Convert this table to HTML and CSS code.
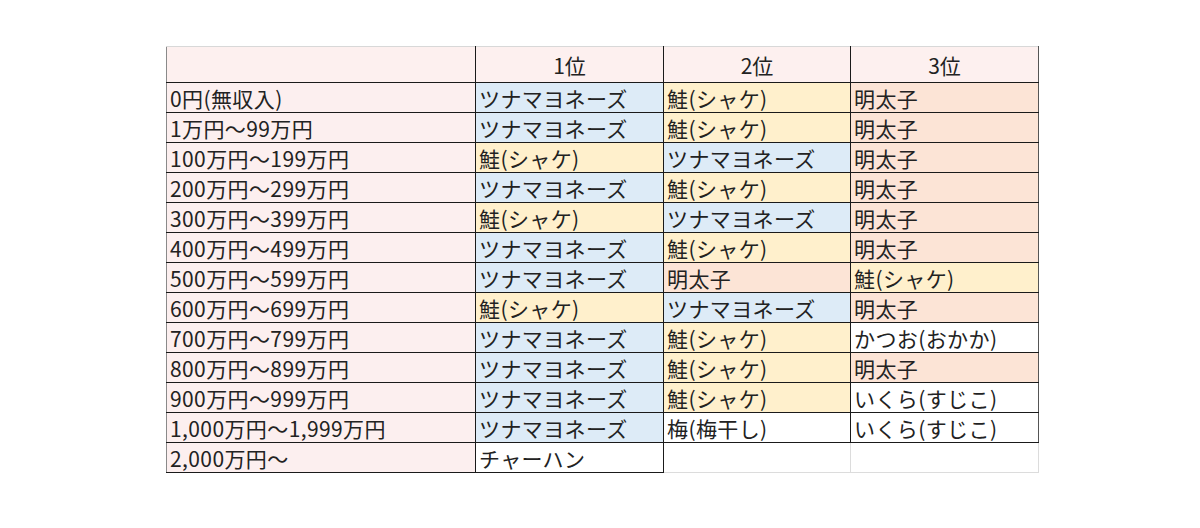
FILE: index.html
```html
<!DOCTYPE html>
<html lang="ja">
<head>
<meta charset="utf-8">
<title>年収別 好きなおにぎりの具</title>
<link rel="stylesheet" href="styles.css">
</head>
<body>
<div class="sheet">
<table class="rank">
<colgroup>
<col class="c-label"><col class="c-first"><col class="c-second"><col class="c-third">
</colgroup>
<thead>
<tr><th class="corner"></th><th>1位</th><th>2位</th><th class="last">3位</th></tr>
</thead>
<tbody>
<tr><td class="label">0円(無収入)</td><td class="tuna">ツナマヨネーズ</td><td class="sake">鮭(シャケ)</td><td class="mentai last">明太子</td></tr>
<tr><td class="label">1万円～99万円</td><td class="tuna">ツナマヨネーズ</td><td class="sake">鮭(シャケ)</td><td class="mentai last">明太子</td></tr>
<tr><td class="label">100万円～199万円</td><td class="sake">鮭(シャケ)</td><td class="tuna">ツナマヨネーズ</td><td class="mentai last">明太子</td></tr>
<tr><td class="label">200万円～299万円</td><td class="tuna">ツナマヨネーズ</td><td class="sake">鮭(シャケ)</td><td class="mentai last">明太子</td></tr>
<tr><td class="label">300万円～399万円</td><td class="sake">鮭(シャケ)</td><td class="tuna">ツナマヨネーズ</td><td class="mentai last">明太子</td></tr>
<tr><td class="label">400万円～499万円</td><td class="tuna">ツナマヨネーズ</td><td class="sake">鮭(シャケ)</td><td class="mentai last">明太子</td></tr>
<tr><td class="label">500万円～599万円</td><td class="tuna">ツナマヨネーズ</td><td class="mentai">明太子</td><td class="sake last">鮭(シャケ)</td></tr>
<tr><td class="label">600万円～699万円</td><td class="sake">鮭(シャケ)</td><td class="tuna">ツナマヨネーズ</td><td class="mentai last">明太子</td></tr>
<tr><td class="label">700万円～799万円</td><td class="tuna">ツナマヨネーズ</td><td class="sake">鮭(シャケ)</td><td class="plain last">かつお(おかか)</td></tr>
<tr><td class="label">800万円～899万円</td><td class="tuna">ツナマヨネーズ</td><td class="sake">鮭(シャケ)</td><td class="mentai last">明太子</td></tr>
<tr><td class="label">900万円～999万円</td><td class="tuna">ツナマヨネーズ</td><td class="sake">鮭(シャケ)</td><td class="plain last">いくら(すじこ)</td></tr>
<tr><td class="label">1,000万円～1,999万円</td><td class="tuna">ツナマヨネーズ</td><td class="plain">梅(梅干し)</td><td class="plain last">いくら(すじこ)</td></tr>
<tr class="final"><td class="label">2,000万円～</td><td class="plain">チャーハン</td><td class="empty"></td><td class="empty last"></td></tr>
</tbody>
</table>
</div>
</body>
</html>
```
FILE: styles.css
```css
html, body {
  margin: 0;
  padding: 0;
  background: #ffffff;
}

.sheet {
  padding: 46px 0 0 166px;
}

.rank {
  border-collapse: collapse;
  table-layout: fixed;
  width: 872px;
  font-family: "Noto Sans CJK JP", "Liberation Sans", sans-serif;
  font-size: 21px;
  color: #222222;
}

.c-label { width: 309px; }
.c-first { width: 188px; }
.c-second { width: 187px; }
.c-third { width: 188px; }

.rank th,
.rank td {
  border: 1px solid #1a1a1a;
  padding: 0 0 0 3px;
  white-space: nowrap;
  overflow: hidden;
  font-weight: 400;
  line-height: 28px;
}

.rank th {
  height: 35px;
  background: #fdf0ef;
  text-align: center;
  border-top: 1px solid #d8d8d8;
  padding: 0;
}

.rank td {
  height: 29px;
  text-align: left;
  letter-spacing: 0.4px;
}

.rank th.corner,
.rank td.label {
  border-left: 1px solid #8a8a8a;
}

.rank th.last,
.rank td.last {
  border-right: 1px solid #555555;
}

.label { background: #fcefef; }
.tuna { background: #ddebf7; }
.sake { background: #fff0cc; }
.mentai { background: #fce4d6; }
.plain { background: #ffffff; }

.rank td.empty {
  background: #ffffff;
  border-top: 1px solid #1a1a1a;
  border-bottom: 1px solid #dcdcdc;
  border-right: 1px solid #dcdcdc;
}

.rank tr.final td.label,
.rank tr.final td.plain {
  border-bottom: 1px solid #1a1a1a;
}
```
